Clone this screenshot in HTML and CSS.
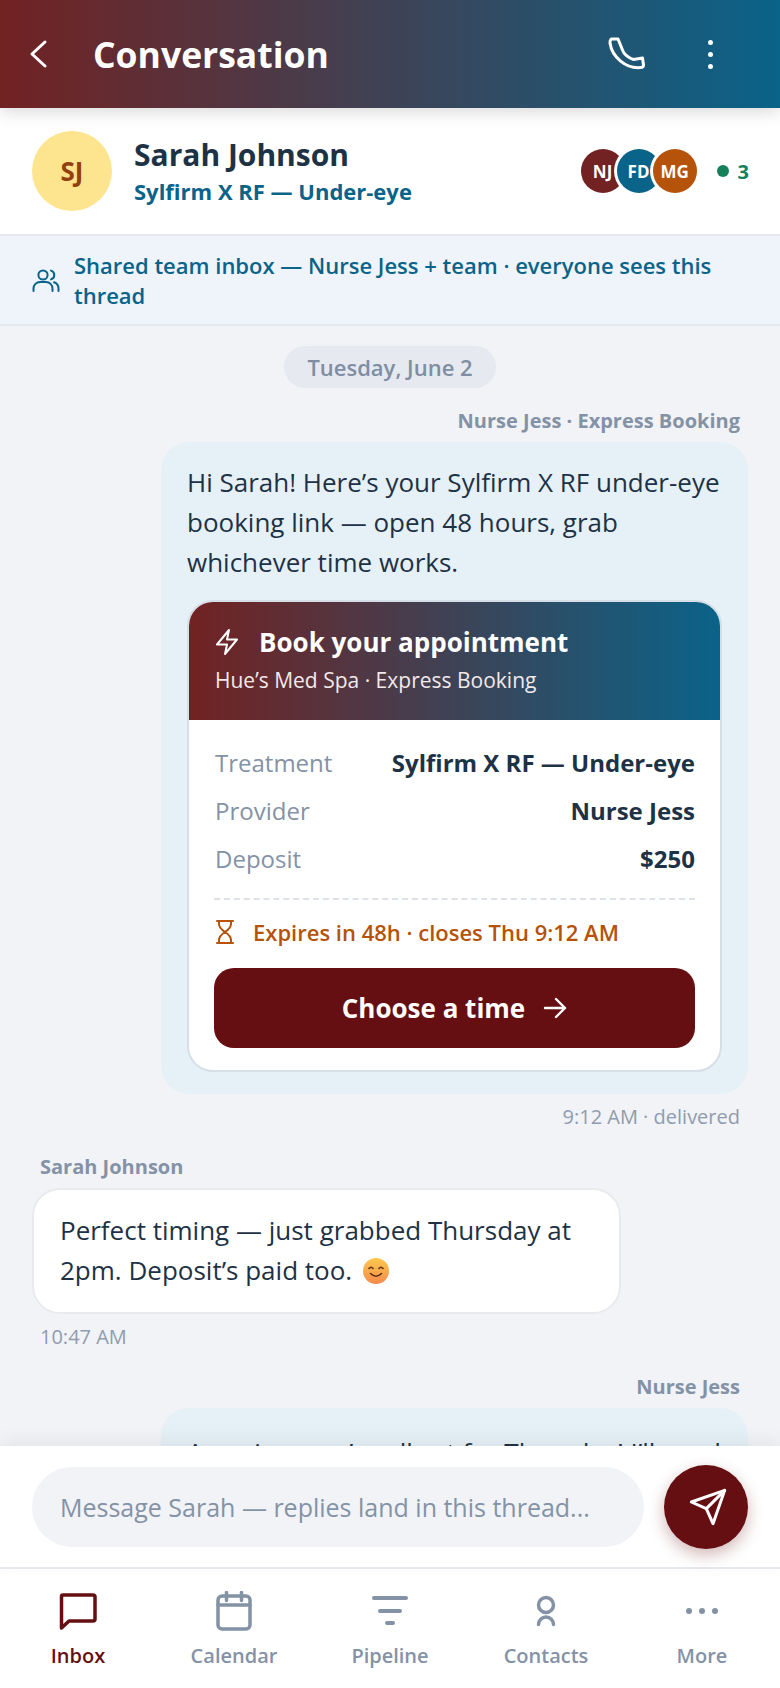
FILE: index.html
```html
<!DOCTYPE html>
<html lang="en">
<head>
    <meta charset="UTF-8">
    <meta name="viewport" content="width=device-width, initial-scale=1.0">
    <title>Conversation</title>
    <link rel="stylesheet" href="styles.css">
</head>
<body>
    <div class="app">
        <header class="topbar">
            <svg class="back-icon" viewBox="0 0 20 30"><polyline points="17 3 4 15 17 27"></polyline></svg>
            <h1>Conversation</h1>
            <svg class="call-icon" viewBox="0 0 38 34"><path d="M4 2h6l4.500 11c1 4 6 8 11 9.500l9-1.500 1 7c0 1.500-1 2.500-3 2.500C18 32 4 20 2 6c0-2.500 .5-4 2-4z"></path></svg>
            <div class="kebab"><span></span><span></span><span></span></div>
        </header>

        <section class="contact">
            <div class="avatar">SJ</div>
            <div class="contact-info">
                <div class="contact-name">Sarah Johnson</div>
                <div class="contact-sub">Sylfirm X RF — Under-eye</div>
            </div>
            <div class="team">
                <span class="mini mini-nj">NJ</span>
                <span class="mini mini-fd">FD</span>
                <span class="mini mini-mg">MG</span>
            </div>
            <span class="online-dot"></span>
            <span class="online-count">3</span>
        </section>

        <div class="shared-banner">
            <svg class="team-icon" viewBox="0 0 28 24"><circle cx="11" cy="7" r="4.6"></circle><path d="M1.500 23v-2.500a6.500 6.500 0 0 1 6.500-6.500h6a6.500 6.500 0 0 1 6.500 6.500V23"></path><path d="M19 2.600a4.600 4.600 0 0 1 0 8.800"></path><path d="M26.500 23v-2.500a6.500 6.500 0 0 0-4.500-6.200"></path></svg>
            <p>Shared team inbox — Nurse Jess + team · everyone sees this thread</p>
        </div>

        <main class="thread">
            <div class="date-pill">Tuesday, June 2</div>

            <div class="sender sender-out">Nurse Jess · Express Booking</div>
            <div class="bubble bubble-out">
                <p>Hi Sarah! Here’s your Sylfirm X RF under-eye booking link — open 48 hours, grab whichever time works.</p>
                <div class="book-card">
                    <div class="book-head">
                        <div class="book-title">
                            <svg class="bolt-icon" viewBox="0 0 24 28"><path d="M14 2 2 16.500h10L10 26l12-14.500H12L14 2z"></path></svg>
                            Book your appointment
                        </div>
                        <div class="book-sub">Hue’s Med Spa · Express Booking</div>
                    </div>
                    <div class="book-body">
                        <div class="book-row"><span>Treatment</span><strong>Sylfirm X RF — Under-eye</strong></div>
                        <div class="book-row"><span>Provider</span><strong>Nurse Jess</strong></div>
                        <div class="book-row"><span>Deposit</span><strong>$250</strong></div>
                        <div class="expires">
                            <svg class="hourglass-icon" viewBox="0 0 20 26"><path d="M2 2h16M2 24h16M4 2v3c0 3 3 6 6 8 3-2 6-5 6-8V2M4 24v-3c0-3 3-6 6-8 3 2 6 5 6 8v3"></path></svg>
                            Expires in 48h · closes Thu 9:12 AM
                        </div>
                        <div class="book-btn">
                            Choose a time
                            <svg class="arrow-icon" viewBox="0 0 24 24"><path d="M2 12h20M13 3l9 9-9 9"></path></svg>
                        </div>
                    </div>
                </div>
            </div>
            <div class="stamp stamp-out">9:12 AM · delivered</div>

            <div class="sender sender-in">Sarah Johnson</div>
            <div class="bubble bubble-in">
                <p>Perfect timing — just grabbed Thursday at 2pm. Deposit’s paid too. <svg class="emoji" viewBox="0 0 26 26"><defs><linearGradient id="emojiFill" x1="0" y1="0" x2="0" y2="1"><stop offset="0" stop-color="#fbc94e"></stop><stop offset="1" stop-color="#f58a4b"></stop></linearGradient></defs><circle cx="13" cy="13" r="13" fill="url(#emojiFill)"></circle><path class="emoji-line" d="M6 10.500q2-2.500 4 0M16 10.500q2-2.500 4 0M7.500 15.500q5.500 5.500 11 0"></path></svg></p>
            </div>
            <div class="stamp">10:47 AM</div>

            <div class="sender sender-out sender-next">Nurse Jess</div>
            <div class="bubble bubble-out bubble-last">
                <p>Amazing, you’re all set for Thursday! I’ll send a reminder the day before.</p>
            </div>
        </main>

        <div class="composer">
            <div class="composer-input">Message Sarah — replies land in this thread...</div>
            <div class="send-btn">
                <svg class="send-icon" viewBox="0 0 24 24"><path d="M22 2 15 22l-4-9-9-4 20-7z"></path><path d="M22 2 11 13"></path></svg>
            </div>
        </div>

        <nav class="tabbar">
            <div class="tab tab-active">
                <svg viewBox="0 0 40 40"><path d="M5 4h30a2 2 0 0 1 2 2v22a2 2 0 0 1-2 2H11l-7.500 7V5.500A1.500 1.500 0 0 1 5 4z"></path></svg>
                <span>Inbox</span>
            </div>
            <div class="tab">
                <svg viewBox="0 0 40 40"><rect x="4" y="5" width="32" height="33" rx="4"></rect><path d="M4 14h32M12.500 1.500v8M27.500 1.500v8"></path></svg>
                <span>Calendar</span>
            </div>
            <div class="tab">
                <svg viewBox="0 0 40 40"><path class="pipe-lines" d="M4 7h32M10 20h20M17 32h6"></path></svg>
                <span>Pipeline</span>
            </div>
            <div class="tab">
                <svg viewBox="0 0 40 40"><circle cx="20" cy="14" r="7.500"></circle><path d="M12.500 33.500a7.500 7.500 0 0 1 15 0"></path></svg>
                <span>Contacts</span>
            </div>
            <div class="tab">
                <svg viewBox="0 0 40 40"><path class="dots" d="M7 20h.01M20 20h.01M33 20h.01"></path></svg>
                <span>More</span>
            </div>
        </nav>
    </div>
</body>
</html>
```

FILE: styles.css
```css
* {
    margin: 0;
    padding: 0;
    box-sizing: border-box;
    font-family: "Open Sans", "Noto Sans", sans-serif;
}

body {
    background-color: #f1f3f7;
}

svg {
    fill: none;
    stroke: currentColor;
    stroke-width: 2;
    stroke-linecap: round;
    stroke-linejoin: round;
    flex-shrink: 0;
}

.app {
    height: 1688px;
    width: 780px;
    display: flex;
    flex-direction: column;
    overflow: hidden;
}

.topbar {
    height: 108px;
    flex-shrink: 0;
    display: flex;
    align-items: center;
    padding: 0 67px 0 28px;
    color: white;
    background: linear-gradient(90deg, #722222, #0a6389);
    box-shadow: 0 4px 16px rgba(0, 0, 0, 0.15);
    position: relative;
}

.topbar h1 {
    font-size: 35.5px;
    font-weight: 700;
    margin-left: 45px;
    flex: 1;
}

.back-icon {
    width: 20px;
    height: 30px;
    stroke-width: 3;
}

.call-icon {
    width: 38px;
    height: 34px;
    stroke-width: 3;
    margin-right: 62px;
}

.kebab {
    display: flex;
    flex-direction: column;
    gap: 7px;
}

.kebab span {
    width: 5px;
    height: 5px;
    border-radius: 50%;
    background: white;
}

.contact {
    height: 128px;
    flex-shrink: 0;
    background: white;
    display: flex;
    align-items: center;
    padding: 0 31px 0 32px;
    border-bottom: 2px solid #e5e8ec;
}

.avatar {
    width: 80px;
    height: 80px;
    border-radius: 50%;
    background: #fde58f;
    color: #92400e;
    font-size: 26px;
    font-weight: 700;
    display: flex;
    align-items: center;
    justify-content: center;
}

.contact-info {
    flex: 1;
    margin-left: 22px;
}

.contact-name {
    font-size: 30px;
    font-weight: 700;
    color: #1e3246;
    line-height: 40px;
}

.contact-sub {
    font-size: 22px;
    font-weight: 700;
    color: #0a6389;
    line-height: 32px;
}

.team {
    display: flex;
}

.mini {
    width: 44px;
    height: 44px;
    border-radius: 50%;
    color: white;
    font-size: 17px;
    font-weight: 700;
    display: flex;
    align-items: center;
    justify-content: center;
}

.mini + .mini {
    margin-left: -8px;
    box-shadow: 0 0 0 3px white;
}

.mini-nj { background: #722222; }
.mini-fd { background: #0a6389; }
.mini-mg { background: #b45309; }

.online-dot {
    width: 12px;
    height: 12px;
    border-radius: 50%;
    background: #15805a;
    margin-left: 20px;
}

.online-count {
    color: #15805a;
    font-size: 20px;
    font-weight: 700;
    margin-left: 9px;
}

.shared-banner {
    height: 90px;
    flex-shrink: 0;
    display: flex;
    align-items: center;
    gap: 14px;
    padding: 0 32px;
    background: #eef4f9;
    border-bottom: 2px solid #e5e8ec;
    color: #0a6389;
}

.shared-banner p {
    font-size: 22px;
    font-weight: 600;
    line-height: 30px;
}

.team-icon {
    width: 28px;
    height: 24px;
}

.thread {
    flex: 1;
    min-height: 0;
    overflow: hidden;
    display: flex;
    flex-direction: column;
    padding: 20px 32px 0;
}

.date-pill {
    align-self: center;
    height: 42px;
    padding: 0 23px;
    border-radius: 21px;
    background: #e6e9ef;
    color: #7f8ea3;
    font-size: 22px;
    font-weight: 600;
    line-height: 42px;
}

.sender {
    font-size: 20px;
    font-weight: 700;
    color: #8492a6;
    line-height: 26px;
}

.sender-out {
    align-self: flex-end;
    margin: 20px 8px 8px 0;
}

.sender-next {
    margin-top: 24px;
}

.sender-in {
    margin: 24px 0 8px 8px;
}

.bubble {
    border-radius: 28px;
    flex-shrink: 0;
}

.bubble p {
    font-size: 26px;
    line-height: 40px;
    color: #1e3246;
}

.bubble-out {
    align-self: flex-end;
    width: 587px;
    padding: 20px 26px 22px;
    background: #e6f0f7;
}

.bubble-last {
    padding-top: 24px;
}

.bubble-in {
    align-self: flex-start;
    width: 589px;
    padding: 20px 26px 22px;
    background: white;
    border: 2px solid #e8eaee;
}

.emoji {
    width: 26px;
    height: 26px;
    vertical-align: -4px;
    margin-left: 4px;
    stroke: none;
}

.emoji-line {
    stroke: #5c3317;
    stroke-width: 1.6;
}

.stamp {
    font-size: 20px;
    color: #8f9cae;
    line-height: 26px;
    margin: 10px 0 0 8px;
}

.stamp-out {
    align-self: flex-end;
    margin: 10px 8px 0 0;
}

.book-card {
    margin-top: 18px;
    border-radius: 26px;
    overflow: hidden;
    background: white;
    border: 2px solid #d6dfe8;
}

.book-head {
    height: 118px;
    padding: 20px 26px 0;
    color: white;
    background: linear-gradient(90deg, #722222, #0a6389);
}

.book-title {
    display: flex;
    align-items: center;
    gap: 20px;
    font-size: 26px;
    font-weight: 700;
    line-height: 40px;
}

.bolt-icon {
    width: 24px;
    height: 28px;
}

.book-sub {
    font-size: 21px;
    line-height: 36px;
    color: #f3e8ea;
}

.book-body {
    padding: 18px 25px 22px;
}

.book-row {
    display: flex;
    justify-content: space-between;
    align-items: center;
    height: 48px;
    font-size: 24px;
    color: #8492a6;
    padding-left: 1px;
}

.book-row strong {
    color: #1e3246;
    font-weight: 700;
}

.expires {
    display: flex;
    align-items: center;
    gap: 18px;
    margin-top: 16px;
    padding: 0 0 4px 1px;
    height: 70px;
    border-top: 2px dashed #dde2e8;
    color: #b45309;
    font-size: 22px;
    font-weight: 600;
}

.hourglass-icon {
    width: 20px;
    height: 26px;
}

.book-btn {
    height: 80px;
    border-radius: 20px;
    background: #660f12;
    color: white;
    font-size: 26px;
    font-weight: 700;
    display: flex;
    align-items: center;
    justify-content: center;
    gap: 18px;
}

.arrow-icon {
    width: 24px;
    height: 24px;
    stroke-width: 2.4;
}

.composer {
    height: 123px;
    flex-shrink: 0;
    background: white;
    display: flex;
    align-items: center;
    gap: 20px;
    padding: 0 32px;
    border-bottom: 2px solid #e5e8ec;
    box-shadow: 0 -6px 18px rgba(0, 0, 0, 0.06);
    position: relative;
}

.composer-input {
    flex: 1;
    height: 80px;
    border-radius: 40px;
    background: #f1f3f7;
    color: #8492a6;
    font-size: 25px;
    line-height: 80px;
    padding-left: 28px;
}

.send-btn {
    width: 84px;
    height: 84px;
    border-radius: 50%;
    background: #660f12;
    color: white;
    display: flex;
    align-items: center;
    justify-content: center;
    box-shadow: 0 6px 16px rgba(102, 15, 18, 0.3);
}

.send-icon {
    width: 40px;
    height: 40px;
    stroke-width: 1.8;
    margin-left: 4px;
}

.tabbar {
    height: 119px;
    flex-shrink: 0;
    background: white;
    display: flex;
}

.tab {
    flex: 1;
    display: flex;
    flex-direction: column;
    align-items: center;
    padding-top: 22px;
    color: #8492a6;
}

.tab svg {
    width: 40px;
    height: 40px;
    stroke-width: 3.500;
}

.tab span {
    font-size: 20px;
    font-weight: 600;
    line-height: 28px;
    margin-top: 11px;
}

.tab-active {
    color: #660f12;
}

.tab svg .pipe-lines {
    stroke-width: 4;
}

.tab svg .dots {
    stroke-width: 6;
}
```
